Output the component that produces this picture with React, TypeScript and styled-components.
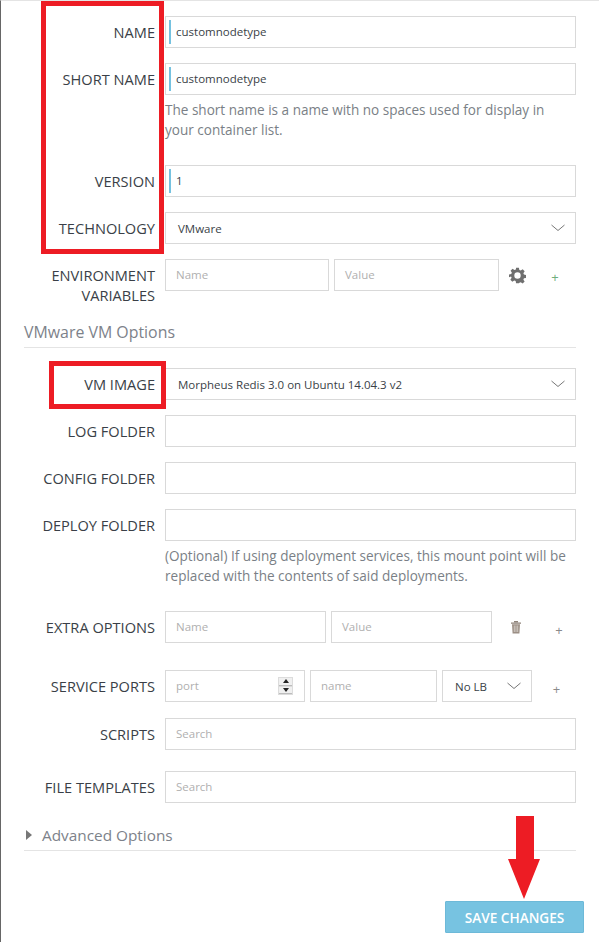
import React from "react";
import styled, { createGlobalStyle } from "styled-components";

const Global = createGlobalStyle`
  html, body { margin: 0; padding: 0; background: #fff; }
  body { font-family: "Open Sans", "Noto Sans", "Liberation Sans", sans-serif; color: #3a3f47; }
  * { box-sizing: border-box; }
`;

const Page = styled.div`
  position: relative;
  width: 599px;
  height: 942px;
  overflow: hidden;
  border-top: 1px solid #e4e4e4;
  border-left: 1px solid #666;
  padding: 15px 23px 0 23px;
`;
const EdgeTop = styled.div`
  position: absolute;
  left: -1px;
  top: 0;
  width: 1px;
  height: 130px;
  background: #1a1a1a;
`;
const Row = styled.div<{ $mb?: number }>`
  display: grid;
  grid-template-columns: 131px 1fr;
  column-gap: 10px;
  margin-bottom: ${(p) => p.$mb ?? 15}px;
`;
const Label = styled.label`
  font-size: 14.6px;
  line-height: 20px;
  padding-top: 6px;
  text-align: right;
  white-space: nowrap;
  color: #3a3f47;
`;
const Fields = styled.div`
  display: flex;
  min-width: 0;
`;
const Col = styled.div`
  display: flex;
  flex-direction: column;
  min-width: 0;
`;
const InputBox = styled.div<{ $w?: number; $mr?: number }>`
  position: relative;
  height: 32px;
  border: 1px solid #d9d9d9;
  background: #fff;
  display: flex;
  align-items: center;
  padding: 0 0 2px 10px;
  font-size: 11.5px;
  color: #3a3f47;
  flex: ${(p) => (p.$w ? `0 0 ${p.$w}px` : "0 0 auto")};
  width: ${(p) => (p.$w ? `${p.$w}px` : "100%")};
  margin-right: ${(p) => p.$mr ?? 0}px;
`;
const Accent = styled.span`
  position: absolute;
  left: 3px;
  top: 3px;
  bottom: 3px;
  width: 2px;
  background: #75c2e0;
`;
const Placeholder = styled.span`
  color: #b0b0b0;
  font-size: 11.5px;
`;
const SelectValue = styled.span`
  padding: 2px 0 0 2px;
  font-size: 11.5px;
`;
const Chevron = styled.svg`
  position: absolute;
  right: 10px;
  top: 11px;
  width: 14px;
  height: 8px;
`;
const Help = styled.p`
  margin: 0;
  padding-top: 5px;
  height: 55px;
  font-size: 13.55px;
  line-height: 20px;
  color: #7a7f86;
`;
const Section = styled.h3`
  margin: 0 0 20px;
  padding: 0;
  height: 24px;
  font-size: 15.9px;
  line-height: 17px;
  font-weight: 400;
  color: #7d828a;
  border-bottom: 1px solid #e4e4e4;
`;
const IconSlot = styled.span<{ $w: number }>`
  flex: 0 0 ${(p) => p.$w}px;
  height: 32px;
  display: flex;
  align-items: center;
  justify-content: center;
  color: #777;
`;
const Plus = styled.span<{ $c?: string; $pt?: number }>`
  font-size: 13px;
  line-height: 32px;
  padding-top: ${(p) => p.$pt ?? 5}px;
  color: ${(p) => p.$c ?? "#8a8a8a"};
`;
const Spinner = styled.span`
  position: absolute;
  right: 11px;
  top: 6px;
  width: 15px;
  height: 18px;
  background: #dcdcdc;
  padding: 1px;
  display: flex;
  flex-direction: column;
  gap: 1px;
`;
const SpinCell = styled.span`
  flex: 1;
  background: #f0f0f0;
  border-bottom: 1px solid #bdbdbd;
  display: flex;
  align-items: center;
  justify-content: center;
`;
const SpinArrow = styled.span<{ $up?: boolean }>`
  width: 0;
  height: 0;
  border-left: 3px solid transparent;
  border-right: 3px solid transparent;
  ${(p) => (p.$up ? "border-bottom: 4px solid #222;" : "border-top: 4px solid #222;")}
`;
const Advanced = styled.div`
  margin-top: 22px;
  height: 26px;
  display: flex;
  align-items: flex-start;
  font-size: 15.35px;
  line-height: 20px;
  color: #7d828a;
  border-bottom: 1px solid #e4e4e4;
`;
const Caret = styled.span`
  width: 0;
  height: 0;
  margin: 5px 10px 0 2px;
  border-top: 5px solid transparent;
  border-bottom: 5px solid transparent;
  border-left: 6px solid #777;
`;
const Footer = styled.div`
  display: flex;
  justify-content: flex-end;
  margin: 50px -8px 0 0;
`;
const Save = styled.button`
  width: 139px;
  height: 32px;
  border: 1px solid #6db9d8;
  border-radius: 1px;
  background: #77c3e1;
  color: #fff;
  font: 600 13.6px "Open Sans", "Noto Sans", sans-serif;
  padding: 0;
`;
const RedBox = styled.div<{ $l: number; $t: number; $w: number; $h: number }>`
  position: absolute;
  left: ${(p) => p.$l}px;
  top: ${(p) => p.$t}px;
  width: ${(p) => p.$w}px;
  height: ${(p) => p.$h}px;
  border: 5px solid #ed1c24;
`;
const Arrow = styled.svg`
  position: absolute;
  left: 506px;
  top: 815px;
  width: 34px;
  height: 83px;
`;

const ChevronIcon = () => (
  <Chevron viewBox="0 0 14 8" fill="none" stroke="#777" strokeWidth="1">
    <path d="M0.5 1 L7 6.500 L13.500 1" />
  </Chevron>
);

const Field = ({ label, mb, children }: { label: React.ReactNode; mb?: number; children: React.ReactNode }) => (
  <Row $mb={mb}>
    <Label>{label}</Label>
    <Fields>{children}</Fields>
  </Row>
);

const Gear = () => (
  <svg width="17" height="17" viewBox="0 0 24 24" fill="#6f6f6f">
    <path
      fillRule="evenodd"
      d="M10 1h4l.6 3.200 2 .8L19.300 3.200l2.800 2.800-1.800 2.700.8 2 3.200.6v4l-3.200.6-.8 2 1.800 2.700-2.800 2.800-2.700-1.800-2 .8L14 23h-4l-.6-3.200-2-.8-2.700 1.800-2.800-2.800 1.800-2.700-.8-2L0 14.500v-4l3.200-.6.8-2L2.200 5.200 5 2.400l2.700 1.800 2-.8zM12 7.500a4.500 4.500 0 1 0 0 9 4.500 4.500 0 0 0 0-9z"
    />
  </svg>
);

const Trash = () => (
  <svg width="12" height="14" viewBox="0 0 12 14">
    <path d="M1 2.500h10v1.200H1z M4 1h4v1.200H4z" fill="#8f8379" />
    <path d="M2 4.200h8l-.6 9.300H2.600z" fill="#9c8f85" />
    <path d="M4.300 5.500v6.500M6 5.500v6.500M7.700 5.500v6.500" stroke="#e6e2de" strokeWidth=".7" />
  </svg>
);

export default function App() {
  return (
    <Page>
      <Global />
      <EdgeTop />
      <Field label="NAME">
        <InputBox><Accent />customnodetype</InputBox>
      </Field>
      <Row $mb={15}>
        <Label>SHORT NAME</Label>
        <Col>
          <InputBox><Accent />customnodetype</InputBox>
          <Help>The short name is a name with no spaces used for display in your container list.</Help>
        </Col>
      </Row>
      <Field label="VERSION">
        <InputBox><Accent />1</InputBox>
      </Field>
      <Field label="TECHNOLOGY">
        <InputBox><SelectValue>VMware</SelectValue><ChevronIcon /></InputBox>
      </Field>
      <Field label={<>ENVIRONMENT<br />VARIABLES</>} mb={19}>
        <InputBox $w={164} $mr={5}><Placeholder>Name</Placeholder></InputBox>
        <InputBox $w={165}><Placeholder>Value</Placeholder></InputBox>
        <IconSlot $w={37}><Gear /></IconSlot>
        <IconSlot $w={38}><Plus $c="#6fae7c" $pt={3}>+</Plus></IconSlot>
      </Field>
      <Section>VMware VM Options</Section>
      <Field label="VM IMAGE">
        <InputBox><SelectValue>Morpheus Redis 3.0 on Ubuntu 14.04.3 v2</SelectValue><ChevronIcon /></InputBox>
      </Field>
      <Field label="LOG FOLDER"><InputBox /></Field>
      <Field label="CONFIG FOLDER"><InputBox /></Field>
      <Row $mb={15}>
        <Label>DEPLOY FOLDER</Label>
        <Col>
          <InputBox />
          <Help>(Optional) If using deployment services, this mount point will be replaced with the contents of said deployments.</Help>
        </Col>
      </Row>
      <Field label="EXTRA OPTIONS" mb={27}>
        <InputBox $w={161} $mr={5}><Placeholder>Name</Placeholder></InputBox>
        <InputBox $w={161}><Placeholder>Value</Placeholder></InputBox>
        <IconSlot $w={48}><Trash /></IconSlot>
        <IconSlot $w={38}><Plus>+</Plus></IconSlot>
      </Field>
      <Field label="SERVICE PORTS" mb={16}>
        <InputBox $w={140} $mr={5}>
          <Placeholder>port</Placeholder>
          <Spinner>
            <SpinCell><SpinArrow $up /></SpinCell>
            <SpinCell><SpinArrow /></SpinCell>
          </Spinner>
        </InputBox>
        <InputBox $w={127} $mr={5}><Placeholder>name</Placeholder></InputBox>
        <InputBox $w={90}>
          <SelectValue>No LB</SelectValue>
          <ChevronIcon />
        </InputBox>
        <IconSlot $w={49}><Plus>+</Plus></IconSlot>
      </Field>
      <Field label="SCRIPTS" mb={21}>
        <InputBox><Placeholder>Search</Placeholder></InputBox>
      </Field>
      <Field label="FILE TEMPLATES" mb={0}>
        <InputBox><Placeholder>Search</Placeholder></InputBox>
      </Field>
      <Advanced><Caret />Advanced Options</Advanced>
      <Footer><Save>SAVE CHANGES</Save></Footer>

      <RedBox $l={40} $t={0} $w={123} $h={253} />
      <RedBox $l={48} $t={360} $w={117} $h={48} />
      <Arrow viewBox="0 0 34 83" fill="#ed1c24">
        <path d="M9 0h18v43h6L17 83 1 43h8z" />
      </Arrow>
    </Page>
  );
}
